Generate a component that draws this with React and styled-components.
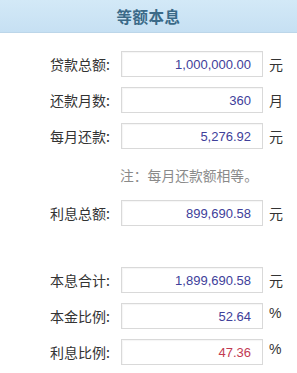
import React from "react";
import styled, { createGlobalStyle } from "styled-components";

const Global = createGlobalStyle`
  html, body { margin: 0; padding: 0; background: #fff; }
  body { font-family: "Noto Sans CJK SC", "Liberation Sans", sans-serif; }
`;

const Page = styled.div`
  width: 297px;
  height: 373px;
  overflow: hidden;
  background: #fff;
`;

const Header = styled.div`
  height: 33px;
  display: flex;
  align-items: center;
  justify-content: center;
  background: linear-gradient(#d3e9f7, #c6e0f3);
  border-bottom: 1px solid #bcd6e9;
  box-sizing: border-box;
  color: #3b6a88;
  font-size: 15.5px;
  font-weight: bold;
  letter-spacing: 0.5px;
`;

const Form = styled.div`
  display: grid;
  grid-template-columns: 110px 142px 34px;
  column-gap: 11px;
  row-gap: 10px;
  padding-top: 18px;
  align-items: center;
`;

const Label = styled.div`
  text-align: right;
  font-size: 14px;
  color: #333;
  line-height: 26px;
  margin-top: ${(p) => (p.$gap ? "31px" : "0")};
`;

const Field = styled.div`
  height: 26px;
  box-sizing: border-box;
  border: 1px solid #d9d9d9;
  box-shadow: inset 1px 1px 1px rgba(0, 0, 0, 0.04);
  background: #fff;
  display: flex;
  align-items: center;
  justify-content: flex-end;
  padding-right: 11px;
  font-family: "Liberation Sans", Arial, sans-serif;
  font-size: 13px;
  color: ${(p) => (p.$red ? "#c23a52" : "#40409a")};
  margin-top: ${(p) => (p.$gap ? "31px" : "0")};
`;

const Unit = styled.div`
  font-size: 14px;
  color: #333;
  margin-left: -5px;
  margin-top: ${(p) => (p.$gap ? "31px" : "0")};
  font-family: ${(p) => (p.$latin ? '"Liberation Sans", Arial, sans-serif' : "inherit")};
  align-self: ${(p) => (p.$latin ? "start" : "center")};
  padding-top: ${(p) => (p.$latin ? "2px" : "0")};
`;

const Note = styled.div`
  grid-column: 2 / 4;
  height: 31px;
  display: flex;
  align-items: center;
  font-size: 13.8px;
  color: #8a8a8a;
  margin-left: -1px;
  white-space: nowrap;
`;

const Spacer = styled.div``;

const rows = [
  { label: "贷款总额:", value: "1,000,000.00", unit: "元" },
  { label: "还款月数:", value: "360", unit: "月" },
  { label: "每月还款:", value: "5,276.92", unit: "元" },
  { note: "注：每月还款额相等。" },
  { label: "利息总额:", value: "899,690.58", unit: "元" },
  { label: "本息合计:", value: "1,899,690.58", unit: "元", gap: true },
  { label: "本金比例:", value: "52.64", unit: "%" },
  { label: "利息比例:", value: "47.36", unit: "%", red: true },
];

export default function App() {
  return (
    <Page>
      <Global />
      <Header>等额本息</Header>
      <Form>
        {rows.map((r, i) =>
          r.note ? (
            <React.Fragment key={i}>
              <Spacer />
              <Note>{r.note}</Note>
            </React.Fragment>
          ) : (
            <React.Fragment key={i}>
              <Label $gap={r.gap}>{r.label}</Label>
              <Field $gap={r.gap} $red={r.red}>{r.value}</Field>
              <Unit $gap={r.gap} $latin={r.unit === "%"}>{r.unit}</Unit>
            </React.Fragment>
          )
        )}
      </Form>
    </Page>
  );
}
